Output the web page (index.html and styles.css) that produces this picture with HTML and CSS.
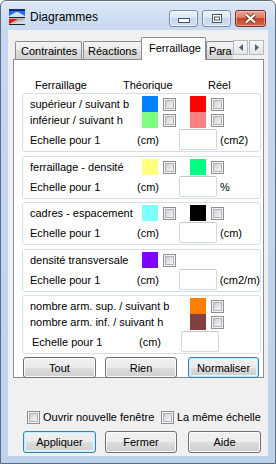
FILE: index.html
```html
<!DOCTYPE html>
<html lang="fr">
<head>
    <meta charset="UTF-8">
    <meta name="viewport" content="width=device-width, initial-scale=1.0">
    <title>Diagrammes</title>
    <link rel="stylesheet" href="styles.css">
</head>
<body>
    <div class="window">
        <div class="titlebar">
            <svg class="app-icon" width="16" height="16" viewBox="0 0 16 16">
                <rect x="0" y="0" width="16" height="1" fill="#1a2a6c"/>
                <polygon points="0,1 16,1 16,7 9,3 7,3 0,7" fill="#1e6cf0"/>
                <polygon points="0,1 16,1 16,2 9,2 7,2 0,2" fill="#1a2a6c"/>
                <rect x="0" y="8" width="16" height="1" fill="#222"/>
                <polygon points="0,9 16,9 16,11 0,15" fill="#b8b8b8"/>
                <polygon points="0,10 9,10 0,15" fill="#e8141c"/>
                <rect x="0" y="15" width="16" height="1" fill="#222"/>
            </svg>
            <span class="title">Diagrammes</span>
            <div class="caption">
                <span class="cap-btn">
                    <svg width="12" height="6" viewBox="0 0 12 6"><rect x="0.5" y="0.5" width="11" height="4" fill="#fff" stroke="#4a5566"/></svg>
                </span>
                <span class="cap-btn">
                    <svg width="10" height="9" viewBox="0 0 10 9"><rect x="0.5" y="0.5" width="9" height="8" fill="#fff" stroke="#4a5566"/><rect x="2.5" y="3" width="5" height="3" fill="#fff" stroke="#4a5566"/></svg>
                </span>
                <span class="cap-btn close">
                    <svg width="13" height="11" viewBox="0 0 13 11"><path d="M2 1.5 L11 9.5 M11 1.5 L2 9.5" stroke="#7a3326" stroke-width="4"/><path d="M2 1.5 L11 9.5 M11 1.5 L2 9.5" stroke="#fff" stroke-width="2.2"/></svg>
                </span>
            </div>
        </div>

        <div class="client">
            <div class="tabstrip">
                <div class="tabs">
                    <div class="tab tab-contraintes">Contraintes</div>
                    <div class="tab tab-reactions">Réactions</div>
                    <div class="tab active">Ferraillage</div>
                    <div class="tab tab-para">Para</div>
                </div>
                <div class="tab-scroll">
                    <span class="scroll-btn"><svg width="4" height="7" viewBox="0 0 4 7"><polygon points="4,0 4,7 0,3.5" fill="#50617f"/></svg></span>
                    <span class="scroll-btn"><svg width="4" height="7" viewBox="0 0 4 7"><polygon points="0,0 0,7 4,3.5" fill="#50617f"/></svg></span>
                </div>
            </div>

            <div class="panel">
                <div class="head">
                    <span class="head-first">Ferraillage</span>
                    <span class="head-second">Théorique</span>
                    <span>Réel</span>
                </div>

                <div class="group">
                    <div class="row">
                        <span class="label">supérieur / suivant b</span>
                        <span class="swatch blue"></span><span class="check"></span>
                        <span class="swatch red second"></span><span class="check"></span>
                    </div>
                    <div class="row">
                        <span class="label">inférieur / suivant h</span>
                        <span class="swatch green"></span><span class="check"></span>
                        <span class="swatch pink second"></span><span class="check"></span>
                    </div>
                    <div class="scale">
                        <span class="scale-label">Echelle pour 1</span>
                        <span class="scale-cm">(cm)</span>
                        <span class="field"></span>
                        <span>(cm2)</span>
                    </div>
                </div>

                <div class="group">
                    <div class="row">
                        <span class="label">ferraillage - densité</span>
                        <span class="swatch yellow"></span><span class="check"></span>
                        <span class="swatch mint second"></span><span class="check"></span>
                    </div>
                    <div class="scale">
                        <span class="scale-label">Echelle pour 1</span>
                        <span class="scale-cm">(cm)</span>
                        <span class="field"></span>
                        <span>%</span>
                    </div>
                </div>

                <div class="group tight">
                    <div class="row">
                        <span class="label">cadres - espacement</span>
                        <span class="swatch cyan"></span><span class="check"></span>
                        <span class="swatch black second"></span><span class="check"></span>
                    </div>
                    <div class="scale">
                        <span class="scale-label">Echelle pour 1</span>
                        <span class="scale-cm">(cm)</span>
                        <span class="field"></span>
                        <span>(cm)</span>
                    </div>
                </div>

                <div class="group">
                    <div class="row">
                        <span class="label">densité transversale</span>
                        <span class="swatch purple"></span><span class="check"></span>
                    </div>
                    <div class="scale">
                        <span class="scale-label">Echelle pour 1</span>
                        <span class="scale-cm">(cm)</span>
                        <span class="field"></span>
                        <span>(cm2/m)</span>
                    </div>
                </div>

                <div class="group tight">
                    <div class="row">
                        <span class="label wide">nombre arm. sup. / suivant b</span>
                        <span class="swatch orange"></span><span class="check"></span>
                    </div>
                    <div class="row">
                        <span class="label wide">nombre arm. inf. / suivant h</span>
                        <span class="swatch brown"></span><span class="check"></span>
                    </div>
                    <div class="scale indent">
                        <span class="scale-label">Echelle pour 1</span>
                        <span class="scale-cm">(cm)</span>
                        <span class="field"></span>
                    </div>
                </div>

                <div class="panel-buttons">
                    <button class="btn btn-tout">Tout</button>
                    <button class="btn btn-rien">Rien</button>
                    <button class="btn btn-norm default">Normaliser</button>
                </div>
            </div>

            <div class="options">
                <label class="option first"><span class="check"></span>Ouvrir nouvelle fenêtre</label>
                <label class="option"><span class="check"></span>La même échelle</label>
            </div>

            <div class="dialog-buttons">
                <button class="btn default">Appliquer</button>
                <button class="btn">Fermer</button>
                <button class="btn btn-aide">Aide</button>
            </div>
        </div>
    </div>
</body>
</html>
```

FILE: styles.css
```css
body {
    margin: 0;
    font-family: 'Liberation Sans', Arial, sans-serif;
    font-size: 11px;
    color: #000;
}

.window {
    width: 276px;
    height: 464px;
    box-sizing: border-box;
    border: 1px solid #5d6b7e;
    border-radius: 6px 6px 0 0;
    background: linear-gradient(#dbe7f6, #c6d8ef 30px, #bed3ec);
    box-shadow: inset 0 1px 0 #f4f8fd;
    padding: 0 7px 7px;
    display: flex;
    flex-direction: column;
}

/* title bar */
.titlebar {
    height: 29px;
    display: flex;
    align-items: flex-start;
    flex-shrink: 0;
}

.app-icon {
    margin: 8px 0 0 1px;
}

.title {
    margin: 8px 0 0 5px;
    font-size: 12px;
    line-height: 17px;
}

.caption {
    margin: 9px 2px 0 auto;
    display: flex;
    gap: 4px;
}

.cap-btn {
    width: 29px;
    height: 17px;
    box-sizing: border-box;
    border: 1px solid #7b8ea8;
    border-radius: 3px;
    background: linear-gradient(#eef3fa, #dae5f3 50%, #c6d6ec 50%, #d2e0f2);
    box-shadow: inset 0 0 0 1px rgba(255, 255, 255, 0.6);
    display: flex;
    align-items: center;
    justify-content: center;
}

.cap-btn:first-child svg {
    margin-top: 5px;
}

.cap-btn.close {
    width: 31px;
    border-color: #7c2f22;
    background: linear-gradient(#eaa898, #d77561 50%, #c4432b 50%, #cf6a52);
    box-shadow: inset 0 0 0 1px rgba(255, 210, 200, 0.5);
}

/* client area */
.client {
    flex: 1;
    background: #f0f0f0;
    padding: 7px 4px 0 5px;
    display: flex;
    flex-direction: column;
}

.tabstrip {
    display: flex;
    align-items: flex-start;
    height: 23px;
    margin-bottom: -1px;
    position: relative;
    z-index: 1;
}

.tabs {
    flex: 1;
    display: flex;
    align-items: flex-end;
    height: 23px;
    padding-left: 2px;
    overflow: hidden;
}

.tab {
    height: 18px;
    box-sizing: border-box;
    margin-bottom: 1px;
    padding: 0 4px 0 5px;
    border: 1px solid #898c95;
    border-bottom: none;
    border-radius: 2px 2px 0 0;
    background: linear-gradient(#f3f3f3, #ebebeb 50%, #dedede 50%, #d2d2d2);
    line-height: 18px;
    white-space: nowrap;
    flex-shrink: 0;
}

.tab + .tab {
    margin-left: 1px;
}

.tab-contraintes {
    width: 67px;
}

.tab-reactions {
    width: 60px;
    padding-left: 4px;
}

.tab.active {
    width: 65px;
    height: 23px;
    margin: 0 -1px 0 -2px;
    padding: 0 0 0 7px;
    background: #fff;
    line-height: 21px;
    position: relative;
    z-index: 1;
}

.tab-para {
    width: 30px;
    padding: 0 0 0 2px;
    border-right: none;
    letter-spacing: -0.2px;
}

.tab-scroll {
    display: flex;
    margin-top: 3px;
}

.scroll-btn {
    width: 15px;
    height: 15px;
    box-sizing: border-box;
    border: 1px solid #b5b9c0;
    background: linear-gradient(#f7f7f7, #e6e6e6);
    display: flex;
    align-items: center;
    justify-content: center;
}

.scroll-btn + .scroll-btn {
    margin-left: 1px;
}

.panel {
    height: 319px;
    box-sizing: border-box;
    flex-shrink: 0;
    background: #fff;
    border: 1px solid #898c95;
    padding: 19px 2px 0 8px;
}

.head {
    display: flex;
    height: 13px;
    line-height: 13px;
    margin-bottom: 1px;
}

.head-first {
    margin-left: 13px;
    width: 88px;
}

.head-second {
    width: 85px;
}

.group {
    border: 1px solid #d5dfe5;
    border-radius: 3px;
    padding: 2px 0 1px 7px;
}

.group + .group {
    margin-top: 4px;
}

.group.tight {
    margin-top: 3px;
}

.row {
    display: flex;
    align-items: center;
    height: 16px;
}

.label {
    width: 112px;
    white-space: nowrap;
}

.label.wide {
    width: 160px;
}

.swatch {
    width: 16px;
    height: 16px;
}

.swatch.second {
    margin-left: 14px;
}

.check {
    width: 13px;
    height: 13px;
    box-sizing: border-box;
    border: 1px solid #8f8f8f;
    background: #f4f4f4;
    display: inline-flex;
    align-items: center;
    justify-content: center;
    flex-shrink: 0;
}

.check::after {
    content: '';
    width: 9px;
    height: 9px;
    box-sizing: border-box;
    border: 1px solid #aeb3b9;
    background: linear-gradient(135deg, #cbcfd5, #f7f7f7);
}

.row .check {
    margin-left: 5px;
}

.blue { background: #0080ff; }
.red { background: #ff0000; }
.green { background: #80ff80; }
.pink { background: #ff8080; }
.yellow { background: #ffff80; }
.mint { background: #00ff80; }
.cyan { background: #80ffff; }
.black { background: #000; }
.purple { background: #8000ff; }
.orange { background: #ff8000; }
.brown { background: #804040; }

.scale {
    display: flex;
    align-items: center;
    height: 21px;
    margin-top: 1px;
}

.scale-label {
    width: 107px;
}

.scale-cm {
    width: 42px;
}

.scale.indent .scale-label {
    padding-left: 2px;
}

.field {
    width: 38px;
    height: 21px;
    box-sizing: border-box;
    border: 1px solid #d3d9e0;
    border-top-color: #c2c8d0;
    border-radius: 2px;
    background: #fff;
    margin-right: 3px;
}

/* buttons */
.btn {
    height: 21px;
    box-sizing: border-box;
    padding: 0;
    border: 1px solid #707070;
    border-radius: 3px;
    background: linear-gradient(#f2f2f2, #ebebeb 50%, #dddddd 50%, #cfcfcf);
    box-shadow: inset 0 0 0 1px #fbfbfb;
    font-family: 'Liberation Sans', Arial, sans-serif;
    font-size: 11px;
    color: #000;
}

.btn.default {
    border-color: #3c7fb1;
    box-shadow: inset 0 0 0 1px #c2ecfc, inset 0 0 0 2px #e4f4fb;
}

.panel-buttons {
    display: flex;
    margin-top: 3px;
}

.btn-tout {
    width: 73px;
    margin-left: 1px;
}

.btn-rien {
    width: 72px;
    margin-left: 9px;
}

.btn-norm {
    width: 71px;
    margin-left: 11px;
}

.options {
    display: flex;
    margin-top: 33px;
    height: 13px;
    line-height: 13px;
    padding-left: 14px;
}

.option {
    display: flex;
    align-items: center;
    white-space: nowrap;
}

.option .check {
    margin-right: 3px;
}

.option.first {
    width: 134px;
}

.dialog-buttons {
    display: flex;
    margin-top: 7px;
    padding-left: 10px;
}

.dialog-buttons .btn {
    width: 72px;
    height: 22px;
}

.dialog-buttons .btn:first-child {
    width: 73px;
}

.dialog-buttons .btn + .btn {
    margin-left: 9px;
}

.dialog-buttons .btn-aide {
    width: 73px;
    margin-left: 11px !important;
}
```
